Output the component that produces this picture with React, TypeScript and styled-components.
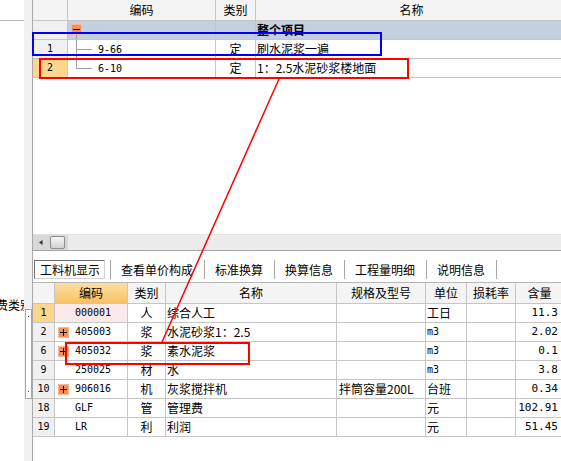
import React from 'react'
import styled, { createGlobalStyle } from 'styled-components'

const cjk = '"Noto Sans CJK SC", "Noto Sans", sans-serif'
const mono = '"DejaVu Sans Mono", "Liberation Mono", monospace'
const gridLine = '#c6c6c6'

const TOP_COLS = '35px 148px 40px 312px'
const BOTTOM_COLS = '22px 73px 38px 171px 89px 41px 49px 48px'

const Global = createGlobalStyle`
  *, *::before, *::after { box-sizing: border-box; }
  html, body { margin: 0; padding: 0; background: #fff; }
  body { font-family: ${cjk}; font-size: 12px; color: #000; }
`

const Screen = styled.div`
  position: relative;
  display: flex;
  width: 561px;
  height: 461px;
  overflow: hidden;
  background: #fff;
`

const SidePanel = styled.div`
  flex: none;
  width: 24px;
  display: flex;
  flex-direction: column;
  overflow: hidden;
`

const SideCap = styled.div`
  height: 21px;
  border-bottom: 1px solid #b4b4b4;
`

const SideLabel = styled.div`
  margin: 277px 0 0 -16px;
  line-height: 14px;
  white-space: nowrap;
`

const Gutter = styled.div`
  flex: none;
  width: 9px;
  background: #f0f0f0;
  border-right: 1px solid #a9a9a9;
`

const Grip = styled.div`
  margin: 309px 0 0 1px;
  width: 7px;
  height: 90px;
  border: 1px solid #a6a6a6;
  background: #fff;
  display: flex;
  flex-direction: column;
  justify-content: space-between;
  align-items: center;
  padding: 6px 0;
`

const GripDot = styled.span`
  width: 1px;
  height: 1px;
  background: #20306a;
`

const Main = styled.div`
  flex: 1;
  min-width: 0;
  display: flex;
  flex-direction: column;
  overflow: hidden;
`

const TopPane = styled.div`
  flex: none;
  height: 251px;
  display: flex;
  flex-direction: column;
  border-bottom: 1px solid #a4a4a4;
`

const GridBody = styled.div`
  flex: 1;
  overflow: hidden;
`

const GridRow = styled.div<{ $cols: string; $head?: boolean; $bg?: string }>`
  display: grid;
  grid-template-columns: ${p => p.$cols};
  width: max-content;
  height: ${p => (p.$head ? 21 : 19)}px;
  border-bottom: 1px solid ${gridLine};
  background: ${p => p.$bg ?? (p.$head ? '#f4f4f4' : '#fff')};
`

const Cell = styled.div<{ $align?: string; $bg?: string; $pad?: string; $bold?: boolean }>`
  display: flex;
  align-items: center;
  justify-content: ${p => p.$align ?? 'flex-start'};
  min-width: 0;
  overflow: hidden;
  white-space: nowrap;
  line-height: 14px;
  padding: ${p => p.$pad ?? '0 1px'};
  border-right: 1px solid ${gridLine};
  background: ${p => p.$bg ?? 'transparent'};
  font-weight: ${p => (p.$bold ? 700 : 400)};
`

const TreeCell = styled(Cell)`
  align-items: stretch;
  padding: 0;
`

const TreeRoot = styled.div`
  margin-left: 3px;
  padding-top: 3px;
  display: flex;
  flex-direction: column;
  align-items: flex-start;
`

const Stem = styled.span`
  flex: 1;
  width: 1px;
  margin-left: 5px;
  background: #a0a0a0;
`

const Branch = styled.svg`
  flex: none;
  margin-left: 8px;
  margin-right: 6px;
`

const Label = styled.span`
  align-self: center;
`

const Num = styled.span<{ $size?: number }>`
  font-family: ${mono};
  font-size: ${p => p.$size ?? 10}px;
`

const HScroll = styled.div`
  flex: none;
  height: 16px;
  display: flex;
  background: #ececec;
  border-top: 1px solid #e2e2e2;
`

const ScrollHead = styled.div`
  width: 35px;
  display: flex;
  align-items: center;
  padding-left: 6px;
  background: #d8d8d8;
`

const Thumb = styled.div`
  width: 15px;
  height: 13px;
  margin-left: 7px;
  border: 1px solid #8e8e8e;
  border-radius: 2px;
  background: linear-gradient(#f6f6f6, #d2d2d2);
`

const TabBar = styled.div`
  flex: none;
  height: 31px;
  display: flex;
  align-items: flex-start;
  padding: 9px 0 0 1px;
  background: #fff;
  white-space: nowrap;
`

const ActiveTab = styled.div`
  height: 19px;
  display: flex;
  align-items: center;
  padding: 0 4px 0 5px;
  margin-right: 5px;
  border: 1px solid;
  border-color: #6e6e6e #d2d2d2 #d2d2d2 #6e6e6e;
`

const Tab = styled.div`
  height: 19px;
  display: flex;
  align-items: center;
  padding: 0 11px 0 10px;
`

const TabSep = styled.span`
  flex: none;
  width: 1px;
  height: 19px;
  background: #a8a8a8;
`

const BottomGrid = styled.div`
  flex: 1;
  overflow: hidden;
  border-top: 1px solid #b8b8b8;
`

const IconSlot = styled.span`
  flex: none;
  width: 11px;
  height: 11px;
  margin-right: 6px;
  display: flex;
`

const Overlay = styled.svg`
  position: absolute;
  left: 0;
  top: 0;
  pointer-events: none;
`

const ToggleIcon = ({ open }: { open: boolean }) => (
  <svg width="11" height="11" viewBox="0 0 11 11">
    <rect x="0.5" y="0.5" width="10" height="10" fill="#f58f59" stroke="#f8b892" />
    <rect x="2" y="5" width="7" height="1" fill="#000" />
    {!open && <rect x="5" y="2" width="1" height="7" fill="#000" />}
  </svg>
)

const TreeBranch = ({ last }: { last?: boolean }) => (
  <Branch width="16" height="18" viewBox="0 0 16 18">
    <line x1="0.5" y1="0" x2="0.5" y2={last ? 9.5 : 18} stroke="#a0a0a0" />
    <line x1="0" y1="9.5" x2="16" y2="9.5" stroke="#a0a0a0" />
  </Branch>
)

const bottomHead = ['', '编码', '类别', '名称', '规格及型号', '单位', '损耗率', '含量']

const items = [
  { no: '1', code: '000001', kind: '人', name: '综合人工', spec: '', unit: '工日', qty: '11.3', current: true },
  { no: '2', code: '405003', kind: '浆', name: '水泥砂浆1：2.5', spec: '', unit: 'm3', qty: '2.02', sub: true },
  { no: '6', code: '405032', kind: '浆', name: '素水泥浆', spec: '', unit: 'm3', qty: '0.1', sub: true },
  { no: '9', code: '250025', kind: '材', name: '水', spec: '', unit: 'm3', qty: '3.8' },
  { no: '10', code: '906016', kind: '机', name: '灰浆搅拌机', spec: '拌筒容量200L', unit: '台班', qty: '0.34', sub: true },
  { no: '18', code: 'GLF', kind: '管', name: '管理费', spec: '', unit: '元', qty: '102.91' },
  { no: '19', code: 'LR', kind: '利', name: '利润', spec: '', unit: '元', qty: '51.45' },
]

const tabs = ['查看单价构成', '标准换算', '换算信息', '工程量明细', '说明信息']

const rowNoBg = '#f0f0f0'
const currentBg = '#fed68b'

export default function App() {
  return (
    <Screen>
      <Global />
      <SidePanel>
        <SideCap />
        <SideLabel>取费类别</SideLabel>
      </SidePanel>
      <Gutter>
        <Grip>
          <GripDot />
          <GripDot />
        </Grip>
      </Gutter>
      <Main>
        <TopPane>
          <GridBody>
            <GridRow $cols={TOP_COLS} $head>
              <Cell />
              <Cell $align="center">编码</Cell>
              <Cell $align="center">类别</Cell>
              <Cell $align="center">名称</Cell>
            </GridRow>
            <GridRow $cols={TOP_COLS} $bg="#c4cfdf">
              <Cell $bg={rowNoBg} />
              <TreeCell>
                <TreeRoot>
                  <ToggleIcon open />
                  <Stem />
                </TreeRoot>
              </TreeCell>
              <Cell />
              <Cell $bold>整个项目</Cell>
            </GridRow>
            <GridRow $cols={TOP_COLS}>
              <Cell $align="center" $bg={rowNoBg}><Num>1</Num></Cell>
              <TreeCell>
                <TreeBranch />
                <Label><Num>9-66</Num></Label>
              </TreeCell>
              <Cell $align="center">定</Cell>
              <Cell>刷水泥浆一遍</Cell>
            </GridRow>
            <GridRow $cols={TOP_COLS}>
              <Cell $align="center" $bg={currentBg}><Num>2</Num></Cell>
              <TreeCell>
                <TreeBranch last />
                <Label><Num>6-10</Num></Label>
              </TreeCell>
              <Cell $align="center">定</Cell>
              <Cell>1：2.5水泥砂浆楼地面</Cell>
            </GridRow>
          </GridBody>
          <HScroll>
            <ScrollHead>
              <svg width="4" height="5" viewBox="0 0 4 5">
                <path d="M3.5 0 L0 2.5 L3.5 5 Z" fill="#303030" />
              </svg>
              <Thumb />
            </ScrollHead>
          </HScroll>
        </TopPane>

        <TabBar>
          <ActiveTab>工料机显示</ActiveTab>
          {tabs.map(t => (
            <React.Fragment key={t}>
              <TabSep />
              <Tab>{t}</Tab>
            </React.Fragment>
          ))}
          <TabSep />
        </TabBar>

        <BottomGrid>
          <GridRow $cols={BOTTOM_COLS} $head>
            {bottomHead.map((h, i) => (
              <Cell
                key={i}
                $align="center"
                $bg={i === 1 ? 'linear-gradient(#fde0a4, #f6c263)' : undefined}
              >
                {h}
              </Cell>
            ))}
          </GridRow>
          {items.map(it => (
            <GridRow $cols={BOTTOM_COLS} key={it.no}>
              <Cell $align="center" $bg={it.current ? currentBg : rowNoBg}>
                <Num>{it.no}</Num>
              </Cell>
              <Cell $pad="0 0 0 3px" $bg={it.current ? '#fce9e9' : undefined}>
                <IconSlot>{it.sub && <ToggleIcon open={false} />}</IconSlot>
                <Num>{it.code}</Num>
              </Cell>
              <Cell $align="center">{it.kind}</Cell>
              <Cell>{it.name}</Cell>
              <Cell $pad="0 2px">{it.spec}</Cell>
              <Cell>{it.unit === 'm3' ? <Num>{it.unit}</Num> : it.unit}</Cell>
              <Cell />
              <Cell $align="flex-end" $pad="0 5px 0 0">
                <Num $size={11}>{it.qty}</Num>
              </Cell>
            </GridRow>
          ))}
        </BottomGrid>
      </Main>

      <Overlay width="561" height="461" viewBox="0 0 561 461">
        <rect x="33" y="33" width="348" height="22" fill="none" stroke="#0000ff" strokeWidth="2" />
        <rect x="40" y="59" width="368" height="19" fill="none" stroke="#ff0000" strokeWidth="2" />
        <line x1="279" y1="79" x2="162" y2="342" stroke="#ff0000" strokeWidth="1.5" />
        <rect x="66" y="343" width="183" height="21" fill="none" stroke="#ff0000" strokeWidth="2" />
      </Overlay>
    </Screen>
  )
}
